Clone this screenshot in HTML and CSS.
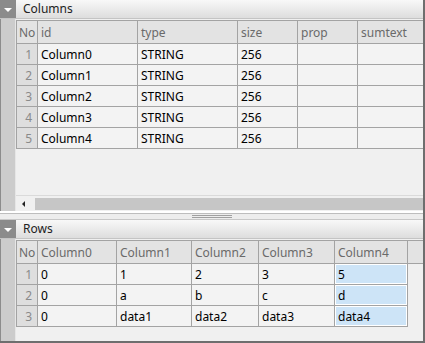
FILE: index.html
```html
<!DOCTYPE html>
<html lang="en">
    <head>
        <meta charset="UTF-8" />
        <title>Table editor</title>
        <link rel="stylesheet" href="styles.css">
    </head>
    <body>
        <div class="win">
            <!-- Columns 패널 -->
            <div class="phead">
                <span class="tog"></span>
                <span class="ptit">Columns</span>
            </div>
            <div class="pbody cols">
                <div class="strip"></div>
                <div class="pcont">
                    <div class="tbox">
                        <table class="grid">
                            <colgroup>
                                <col style="width:21px" />
                                <col style="width:100px" />
                                <col style="width:100px" />
                                <col style="width:60px" />
                                <col style="width:60px" />
                                <col style="width:70px" />
                            </colgroup>
                            <tr>
                                <th class="no">No</th><th>id</th><th>type</th><th>size</th><th>prop</th><th>sumtext</th>
                            </tr>
                            <tr><td class="no">1</td><td>Column0</td><td>STRING</td><td>256</td><td></td><td></td></tr>
                            <tr><td class="no">2</td><td>Column1</td><td>STRING</td><td>256</td><td></td><td></td></tr>
                            <tr><td class="no">3</td><td>Column2</td><td>STRING</td><td>256</td><td></td><td></td></tr>
                            <tr><td class="no">4</td><td>Column3</td><td>STRING</td><td>256</td><td></td><td></td></tr>
                            <tr><td class="no">5</td><td>Column4</td><td>STRING</td><td>256</td><td></td><td></td></tr>
                        </table>
                    </div>
                    <!-- 가로 스크롤바 -->
                    <div class="hscroll">
                        <span class="arr"></span>
                        <span class="thumb"></span>
                    </div>
                </div>
            </div>

            <!-- 분할바 -->
            <div class="split"><span class="grip"></span></div>

            <!-- Rows 패널 -->
            <div class="phead">
                <span class="tog"></span>
                <span class="ptit">Rows</span>
            </div>
            <div class="pbody rows">
                <div class="strip"></div>
                <div class="pcont">
                    <div class="tbox">
                        <table class="grid">
                            <colgroup>
                                <col style="width:21px" />
                                <col style="width:79px" />
                                <col style="width:75px" />
                                <col style="width:67px" />
                                <col style="width:76px" />
                                <col style="width:73px" />
                                <col style="width:20px" />
                            </colgroup>
                            <tr>
                                <th class="no">No</th><th>Column0</th><th>Column1</th><th>Column2</th><th>Column3</th><th>Column4</th><th class="fill"></th>
                            </tr>
                            <tr><td class="no">1</td><td>0</td><td>1</td><td>2</td><td>3</td><td class="sel">5</td><td class="fill"></td></tr>
                            <tr><td class="no">2</td><td>0</td><td>a</td><td>b</td><td>c</td><td class="sel">d</td><td class="fill"></td></tr>
                            <tr><td class="no">3</td><td>0</td><td>data1</td><td>data2</td><td>data3</td><td class="sel">data4</td><td class="fill"></td></tr>
                        </table>
                    </div>
                </div>
            </div>
        </div>
    </body>
</html>
```

FILE: styles.css
```css
:root {
    --line: #a3a3a3;
    --bg: #f0f0f0;
}

body {
    margin: 0;
    background-color: var(--bg);
    font-family: "Noto Sans", "Open Sans", sans-serif;
    font-size: 12px;
    color: #000;
    overflow: hidden;
}

/* 전체 창 */
.win {
    width: 425px;
    height: 343px;
    box-sizing: border-box;
    border-right: 2px solid #6e6e6e;
    border-bottom: 2px solid #6e6e6e;
    display: flex;
    flex-direction: column;
    overflow: hidden;
}

/* 패널 머리 */
.phead {
    height: 19px;
    flex: none;
    display: flex;
    align-items: stretch;
    background: linear-gradient(#f8f8f8, #dddddd);
    border-bottom: 1px solid #c4c4c4;
    box-sizing: border-box;
}
.tog {
    width: 16px;
    flex: none;
    background-color: #8b8b8b;
    position: relative;
}
.tog::after {
    content: "";
    position: absolute;
    left: 4px;
    top: 8px;
    border-left: 4px solid transparent;
    border-right: 4px solid transparent;
    border-top: 4px solid #fff;
}
.ptit {
    padding-left: 7px;
    line-height: 18px;
    color: #222;
}

/* 패널 몸통 */
.pbody {
    display: flex;
}
.pbody.cols {
    height: 192px;
}
.pbody.rows {
    flex: 1;
}
.strip {
    width: 16px;
    flex: none;
    box-sizing: border-box;
    border-left: 1px solid #8c8c8c;
    background-color: #cccccc;
    border-right: 1px solid #e6e6e6;
}
.pcont {
    flex: 1;
    min-width: 0;
    display: flex;
    flex-direction: column;
}
.tbox {
    flex: 1;
    overflow: hidden;
    padding-top: 1px;
}

/* 표 */
.grid {
    border-collapse: collapse;
    table-layout: fixed;
    width: max-content;
}
.grid th,
.grid td {
    border: 1px solid var(--line);
    height: 21px;
    padding: 0 0 0 3px;
    text-align: left;
    white-space: nowrap;
    overflow: hidden;
    font-weight: normal;
    box-sizing: border-box;
}
.grid th {
    height: 23px;
    background-color: #e3e3e3;
    color: #6a6a6a;
}
.grid td {
    background-color: #f3f3f3;
}
.grid td.no {
    background-color: #dedede;
    color: #8a8a8a;
    text-align: right;
    padding: 0 5px 0 0;
}
.grid th.no {
    padding-left: 2px;
}
.grid td.sel {
    background-color: #cde4f7;
    box-shadow: inset 0 0 0 1px #fff;
}
.grid td.fill {
    border: none;
    background: transparent;
}
.grid th.fill {
    border-right: none;
}

/* 가로 스크롤바 */
.hscroll {
    height: 16px;
    flex: none;
    display: flex;
    align-items: center;
    border-top: 1px solid #dadada;
    box-sizing: border-box;
}
.arr {
    width: 16px;
    flex: none;
    position: relative;
    height: 12px;
}
.arr::after {
    content: "";
    position: absolute;
    left: 6px;
    top: 3px;
    border-top: 3px solid transparent;
    border-bottom: 3px solid transparent;
    border-right: 3px solid #222;
}
.thumb {
    flex: 1;
    height: 12px;
    margin-left: 3px;
    background-color: #c6c6c6;
}

/* 분할바 */
.split {
    height: 9px;
    flex: none;
    box-sizing: border-box;
    border-top: 2px solid #fff;
    border-bottom: 1px solid #c8c8c8;
    display: flex;
    justify-content: center;
    align-items: center;
    background-color: #ededed;
    box-shadow: inset 0 1px 0 #bdbdbd;
}
.grip {
    width: 40px;
    height: 3px;
    border-top: 1px solid #a0a0a0;
    border-bottom: 1px solid #a0a0a0;
    box-sizing: border-box;
    margin-top: 1px;
}
```
